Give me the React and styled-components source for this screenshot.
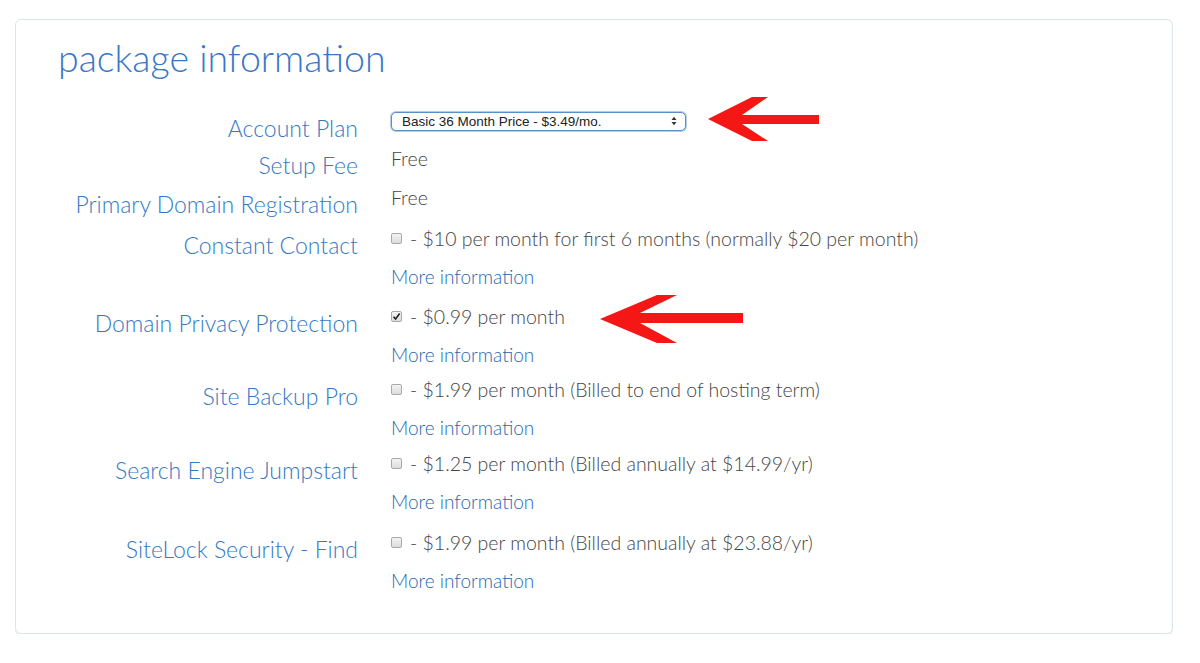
import React from "react"
import styled, { createGlobalStyle } from "styled-components"

const GlobalStyle = createGlobalStyle`
    body {
        margin: 0;
        background: #ffffff;
        font-family: 'Lato', 'Open Sans', sans-serif;
    }
`

const Page = styled.div`
    padding: 19px 27px 0 15px;
`

const Card = styled.section`
    position: relative;
    height: 615px;
    box-sizing: border-box;
    border: 1px solid #d9e6ee;
    border-radius: 6px;
    box-shadow: 0 2px 0 #e3edf4;
    padding-top: 15px;
`

const Title = styled.h1`
    margin: 0 0 0 42px;
    font-size: 37.5px;
    line-height: 46px;
    font-weight: 300;
    color: #3877c6;
`

const Form = styled.div`
    margin-top: 21px;
    display: flex;
    flex-direction: column;
`

const Row = styled.div`
    display: grid;
    grid-template-columns: 342px 1fr;
    column-gap: 33px;
    margin-top: ${({ $shift }) => $shift || 0}px;
`

const Label = styled.div`
    text-align: right;
    padding-top: 7px;
    margin-bottom: -7px;
    height: 38px;
    line-height: 38px;
    font-size: 23px;
    font-weight: 300;
    color: #3479c4;
    white-space: nowrap;
`

const Values = styled.div`
    display: flex;
    flex-direction: column;
`

const Line = styled.div`
    height: 38px;
    display: flex;
    align-items: center;
    font-size: 19.5px;
    font-weight: 300;
    color: #454545;
    white-space: nowrap;
`

const MoreLink = styled.a`
    color: #2767b2;
    text-decoration: none;
    font-size: 19px;
    font-weight: 300;
`

const Select = styled.div`
    width: 295px;
    height: 19px;
    box-sizing: border-box;
    border: 1px solid #5b8fca;
    box-shadow: 0 0 0 1px rgba(110, 160, 215, 0.55);
    border-radius: 5px;
    display: flex;
    align-items: center;
    justify-content: space-between;
    padding: 0 8px 0 10px;
    font-family: 'Liberation Sans', Arial, sans-serif;
    font-size: 13.5px;
    font-weight: 400;
    color: #222222;
    background: #ffffff;
`

const Check = styled.span`
    width: 11px;
    height: 11px;
    box-sizing: border-box;
    border: 1px solid #a9a9a9;
    border-radius: 2px;
    background: linear-gradient(#f4f4f4, #dcdcdc);
    margin-right: 8px;
    display: inline-flex;
    align-items: center;
    justify-content: center;
`

const Arrow = styled.svg`
    position: absolute;
    left: ${({ $x }) => $x}px;
    top: ${({ $y }) => $y}px;
`

const RedArrow = ({ x, y, w, h, points }) => (
    <Arrow $x={x} $y={y} width={w} height={h} viewBox={`0 0 ${w} ${h}`}>
        <polygon points={points} fill="#f51616" />
    </Arrow>
)

const Option = ({ checked, children }) => (
    <Line>
        <Check>
            {checked && (
                <svg width="9" height="9" viewBox="0 0 9 9">
                    <path d="M1.5 4.8 L3.6 7 L7.6 1.6" fill="none" stroke="#222" strokeWidth="1.6" />
                </svg>
            )}
        </Check>
        {children}
    </Line>
)

const extras = [
    { label: "Constant Contact", text: "- $10 per month for first 6 months (normally $20 per month)", shift: 3 },
    { label: "Domain Privacy Protection", text: "- $0.99 per month", checked: true, shift: 2 },
    { label: "Site Backup Pro", text: "- $1.99 per month (Billed to end of hosting term)", shift: -3 },
    { label: "Search Engine Jumpstart", text: "- $1.25 per month (Billed annually at $14.99/yr)", shift: -2 },
    { label: "SiteLock Security - Find", text: "- $1.99 per month (Billed annually at $23.88/yr)", shift: 3 },
]

const App = () => {
    return (
        <Page>
            <GlobalStyle />
            <Card>
                <Title>package information</Title>
                <Form>
                    <Row>
                        <Label>Account Plan</Label>
                        <Values>
                            <Line>
                                <Select>
                                    <span>Basic 36 Month Price - $3.49/mo.</span>
                                    <svg width="6" height="10" viewBox="0 0 6 10">
                                        <path d="M0.5 4 L3 0.8 L5.5 4 Z M0.5 6 L3 9.2 L5.5 6 Z" fill="#333" />
                                    </svg>
                                </Select>
                            </Line>
                        </Values>
                    </Row>
                    <Row $shift={-1}>
                        <Label>Setup Fee</Label>
                        <Values><Line>Free</Line></Values>
                    </Row>
                    <Row $shift={1}>
                        <Label>Primary Domain Registration</Label>
                        <Values><Line>Free</Line></Values>
                    </Row>
                    {extras.map((item) => (
                        <Row key={item.label} $shift={item.shift}>
                            <Label>{item.label}</Label>
                            <Values>
                                <Option checked={item.checked}>{item.text}</Option>
                                <Line><MoreLink href="#">More information</MoreLink></Line>
                            </Values>
                        </Row>
                    ))}
                </Form>
                <RedArrow x={692} y={76} w={112} h={46}
                    points="0,23 44,1 60,1 34,19 111,19 111,28 34,28 60,45 44,45" />
                <RedArrow x={584} y={274} w={144} h={50}
                    points="0,25 57,1 77,1 40,19 143,19 143,29 40,29 77,49 57,49" />
            </Card>
        </Page>
    )
}

export default App
